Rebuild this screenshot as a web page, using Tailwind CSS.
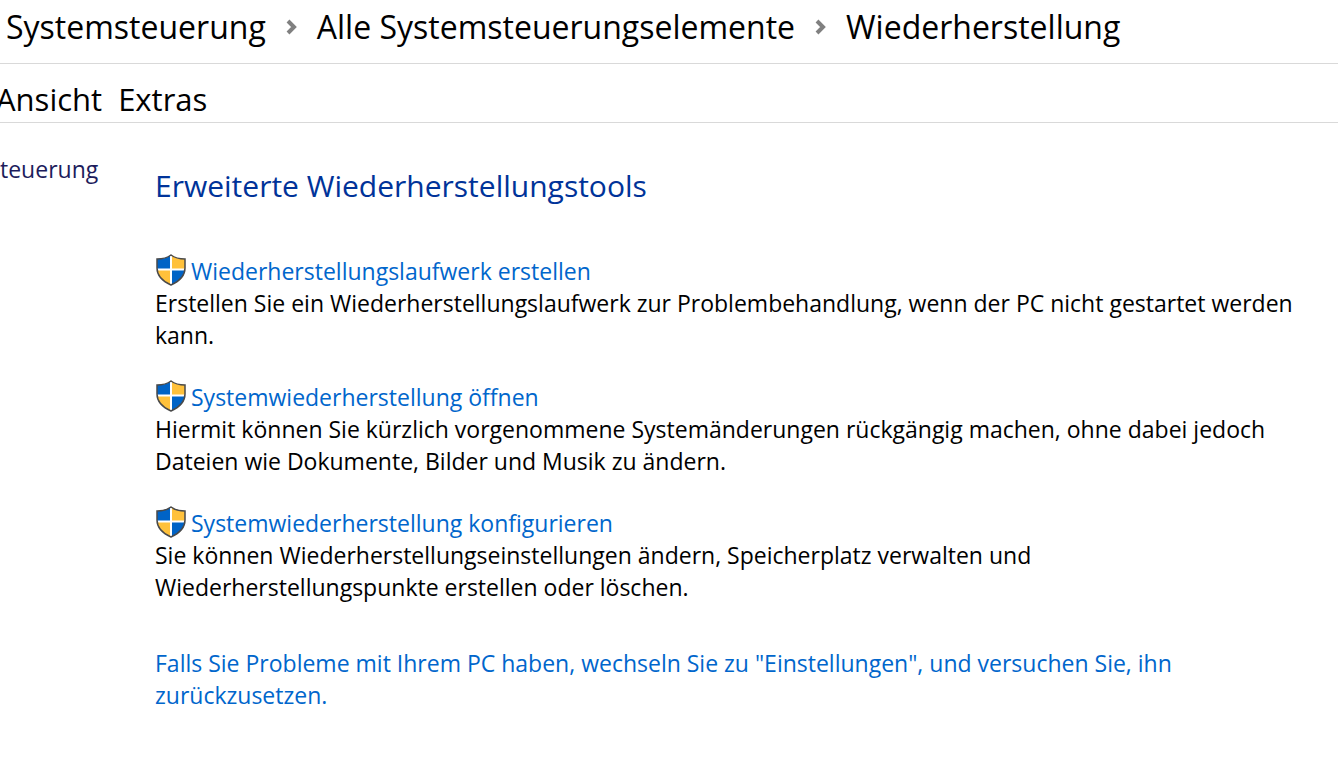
<!DOCTYPE html>
<html lang="de">
<head>
    <meta charset="UTF-8">
    <meta name="viewport" content="width=device-width, initial-scale=1.0">
    <title>Wiederherstellung</title>
    <script src="https://cdn.jsdelivr.net/npm/@tailwindcss/browser@4"></script>
</head>
<body class="min-h-screen bg-white text-black overflow-x-hidden font-['Open_Sans','Noto_Sans',sans-serif]">
    <!-- Schild-Symbol -->
    <svg class="hidden">
        <symbol id="shield" viewBox="0 0 30 32">
            <path d="M15 1C11 4 6 5 1 5V14C1 22 6 27 15 31Z" fill="#0063c6"/>
            <path d="M15 1C19 4 24 5 29 5V14C29 22 24 27 15 31Z" fill="#ffc13b"/>
            <path d="M1 15.500H15V31C6 27 1.500 22 1 15.500Z" fill="#ffc13b"/>
            <path d="M29 15.500H15V31C24 27 28.500 22 29 15.500Z" fill="#0063c6"/>
            <path d="M15 2V30M1 15.500H29" stroke="#fff" stroke-width="2"/>
            <path d="M15 1C11 4 6 5 1 5V14C1 22 6 27 15 31C24 27 29 22 29 14V5C24 5 19 4 15 1Z" fill="none" stroke="#4a4a4a" stroke-width="1.500"/>
        </symbol>
    </svg>

    <!-- Adressleiste -->
    <header class="border-b border-[#d9d9d9]">
        <nav aria-label="Pfad" class="flex items-center h-[63px] pl-[6px] pb-[10px] text-[32px] whitespace-nowrap">
            <a href="#">Systemsteuerung</a>
            <svg class="w-[11px] h-4 mx-5" viewBox="0 0 11 16" fill="none" stroke="#808080" stroke-width="4"><path d="M2 2l6 6-6 6"/></svg>
            <a href="#">Alle Systemsteuerungselemente</a>
            <svg class="w-[11px] h-4 mx-5" viewBox="0 0 11 16" fill="none" stroke="#808080" stroke-width="4"><path d="M2 2l6 6-6 6"/></svg>
            <a href="#">Wiederherstellung</a>
        </nav>
    </header>

    <!-- Menüleiste -->
    <div class="flex items-center gap-4 h-[59px] pt-3 border-b border-[#d9d9d9] text-[31px] whitespace-nowrap">
        <button type="button" class="-ml-1">Ansicht</button>
        <button type="button">Extras</button>
    </div>

    <div class="flex text-[23px] leading-8">
        <aside class="w-[155px] shrink-0 pt-[30px] text-[#1c1c5c]">
            <a href="#">teuerung</a>
        </aside>

        <main class="flex-1 pt-[42px] pr-10">
            <h1 class="text-[30px] leading-[42px] text-[#003399]">Erweiterte Wiederherstellungstools</h1>

            <ul class="mt-12 space-y-[30px]">
                <li>
                    <a href="#" class="flex items-center gap-1 text-[#0066cc]">
                        <svg class="w-8 h-8 -mt-[2px]"><use href="#shield"/></svg>
                        Wiederherstellungslaufwerk erstellen
                    </a>
                    <p>Erstellen Sie ein Wiederherstellungslaufwerk zur Problembehandlung, wenn der PC nicht gestartet werden kann.</p>
                </li>
                <li>
                    <a href="#" class="flex items-center gap-1 text-[#0066cc]">
                        <svg class="w-8 h-8 -mt-[2px]"><use href="#shield"/></svg>
                        Systemwiederherstellung öffnen
                    </a>
                    <p>Hiermit können Sie kürzlich vorgenommene Systemänderungen rückgängig machen, ohne dabei jedoch Dateien wie Dokumente, Bilder und Musik zu ändern.</p>
                </li>
                <li>
                    <a href="#" class="flex items-center gap-1 text-[#0066cc]">
                        <svg class="w-8 h-8 -mt-[2px]"><use href="#shield"/></svg>
                        Systemwiederherstellung konfigurieren
                    </a>
                    <p>Sie können Wiederherstellungseinstellungen ändern, Speicherplatz verwalten und Wiederherstellungspunkte erstellen oder löschen.</p>
                </li>
            </ul>

            <a href="#" class="block mt-11 text-[#0066cc]">Falls Sie Probleme mit Ihrem PC haben, wechseln Sie zu "Einstellungen", und versuchen Sie, ihn zurückzusetzen.</a>
        </main>
    </div>
</body>
</html>
